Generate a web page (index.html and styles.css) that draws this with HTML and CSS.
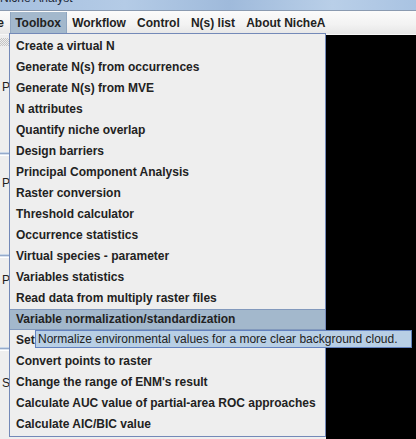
FILE: index.html
```html
<!DOCTYPE html>
<html>
<head>
<meta charset="utf-8">
<link rel="stylesheet" href="styles.css">
</head>
<body>
<div class="window">
  <div class="titlebar"><span class="title">Niche Analyst</span></div>
  <div class="menubar">
    <span class="menu first">File</span>
    <span class="menu selected">Toolbox</span>
    <span class="menu">Workflow</span>
    <span class="menu">Control</span>
    <span class="menu">N(s) list</span>
    <span class="menu">About NicheA</span>
  </div>
  <div class="content">
    <div class="leftpanel">
      <div class="grip"></div>
      <div class="section s1"><span class="label">Parameters</span></div>
      <div class="sep"></div>
      <div class="section s2"><span class="label">Parameters</span></div>
      <div class="sep"></div>
      <div class="section s3"><span class="label">Parameters</span></div>
      <div class="sep"></div>
      <div class="section s4"><span class="label">Settings</span></div>
    </div>
    <div class="canvas"></div>
  </div>

  <div class="popup">
    <div class="item">Create a virtual N</div>
    <div class="item">Generate N(s) from occurrences</div>
    <div class="item">Generate N(s) from MVE</div>
    <div class="item">N attributes</div>
    <div class="item">Quantify niche overlap</div>
    <div class="item">Design barriers</div>
    <div class="item">Principal Component Analysis</div>
    <div class="item">Raster conversion</div>
    <div class="item">Threshold calculator</div>
    <div class="item">Occurrence statistics</div>
    <div class="item">Virtual species - parameter</div>
    <div class="item">Variables statistics</div>
    <div class="item">Read data from multiply raster files</div>
    <div class="item active">Variable normalization/standardization</div>
    <div class="item">Set background cloud</div>
    <div class="item">Convert points to raster</div>
    <div class="item">Change the range of ENM's result</div>
    <div class="item">Calculate AUC value of partial-area ROC approaches</div>
    <div class="item">Calculate AIC/BIC value</div>
  </div>

  <div class="tooltip">Normalize environmental values for a more clear background cloud.</div>
</div>
</body>
</html>
```

FILE: styles.css
```css
html, body {
  margin: 0;
  padding: 0;
}
body {
  width: 416px;
  height: 439px;
  overflow: hidden;
  font-family: "Liberation Sans", Arial, sans-serif;
  font-size: 12px;
  color: #222;
  background: #eeeeee;
}
.window {
  position: relative;
  width: 416px;
  height: 439px;
  display: flex;
  flex-direction: column;
}
.titlebar {
  height: 10px;
  border-bottom: 1px solid #8a9ab0;
  background: linear-gradient(90deg, #a6c0df 0%, #b4cbe6 30%, #9fbadb 55%, #b9cfe8 80%, #a9c3e2 100%);
  overflow: hidden;
  flex: none;
}
.title {
  display: block;
  margin-top: -8px;
  font-size: 12px;
  line-height: 12px;
  color: #1e2a3a;
  white-space: nowrap;
}
.menubar {
  height: 22px;
  padding-top: 1px;
  display: flex;
  align-items: stretch;
  background: linear-gradient(#fbfbfb, #f2f2f2 60%, #e6e6e6);
  flex: none;
  white-space: nowrap;
}
.menu {
  display: flex;
  align-items: center;
  padding: 0 5.6px;
  font-weight: bold;
  color: #222;
}
.menu.first {
  margin-left: -22.3px;
}
.menu.selected {
  background: #a3b8cc;
  border-left: 1px solid #8fa6c0;
  border-right: 1px solid #8fa6c0;
  padding: 0 4.6px;
}
.content {
  flex: 1;
  display: flex;
  border-top: 1px solid #f7f7f7;
}
.leftpanel {
  width: 326px;
  background: #eeeeee;
  display: flex;
  flex-direction: column;
}
.grip {
  margin-top: 3px;
  height: 8px;
  width: 9px;
  background: repeating-conic-gradient(#c4c4c4 0 25%, #eeeeee 0 50%) 0 0 / 2px 2px;
}
.section {
  line-height: 14px;
  padding-left: 2px;
  white-space: nowrap;
}
.s1 { height: 106px; padding-top: 34px; box-sizing: border-box; }
.s2 { height: 98px; padding-top: 20px; box-sizing: border-box; }
.s3 { height: 89px; padding-top: 15px; box-sizing: border-box; }
.s4 { flex: 1; padding-top: 25px; }
.label {
  color: #222;
}
.sep {
  height: 4px;
  background: linear-gradient(#c9d7e8 0 1px, #95aacb 1px 2px, #d9e2ee 2px 3px, #ffffff 3px 4px);
}
.canvas {
  flex: 1;
  background: #000;
}
.popup {
  position: absolute;
  left: 9px;
  top: 33px;
  width: 315px;
  padding: 2px 0 1px 0;
  border: 1px solid #7389b8;
  background: #eeeeee;
}
.item {
  height: 21px;
  line-height: 21px;
  padding-left: 6px;
  font-weight: bold;
  color: #222;
  white-space: nowrap;
  box-sizing: border-box;
}
.item.active {
  background: #a3b8cc;
  border-top: 1px solid #8299bc;
  border-bottom: 1px solid #8299bc;
  line-height: 19px;
}
.tooltip {
  position: absolute;
  left: 35px;
  top: 330px;
  width: 373px;
  height: 16px;
  line-height: 16px;
  padding-left: 2px;
  border: 1px solid #6382bf;
  background: #b8cfe5;
  color: #222;
  white-space: nowrap;
}
```
